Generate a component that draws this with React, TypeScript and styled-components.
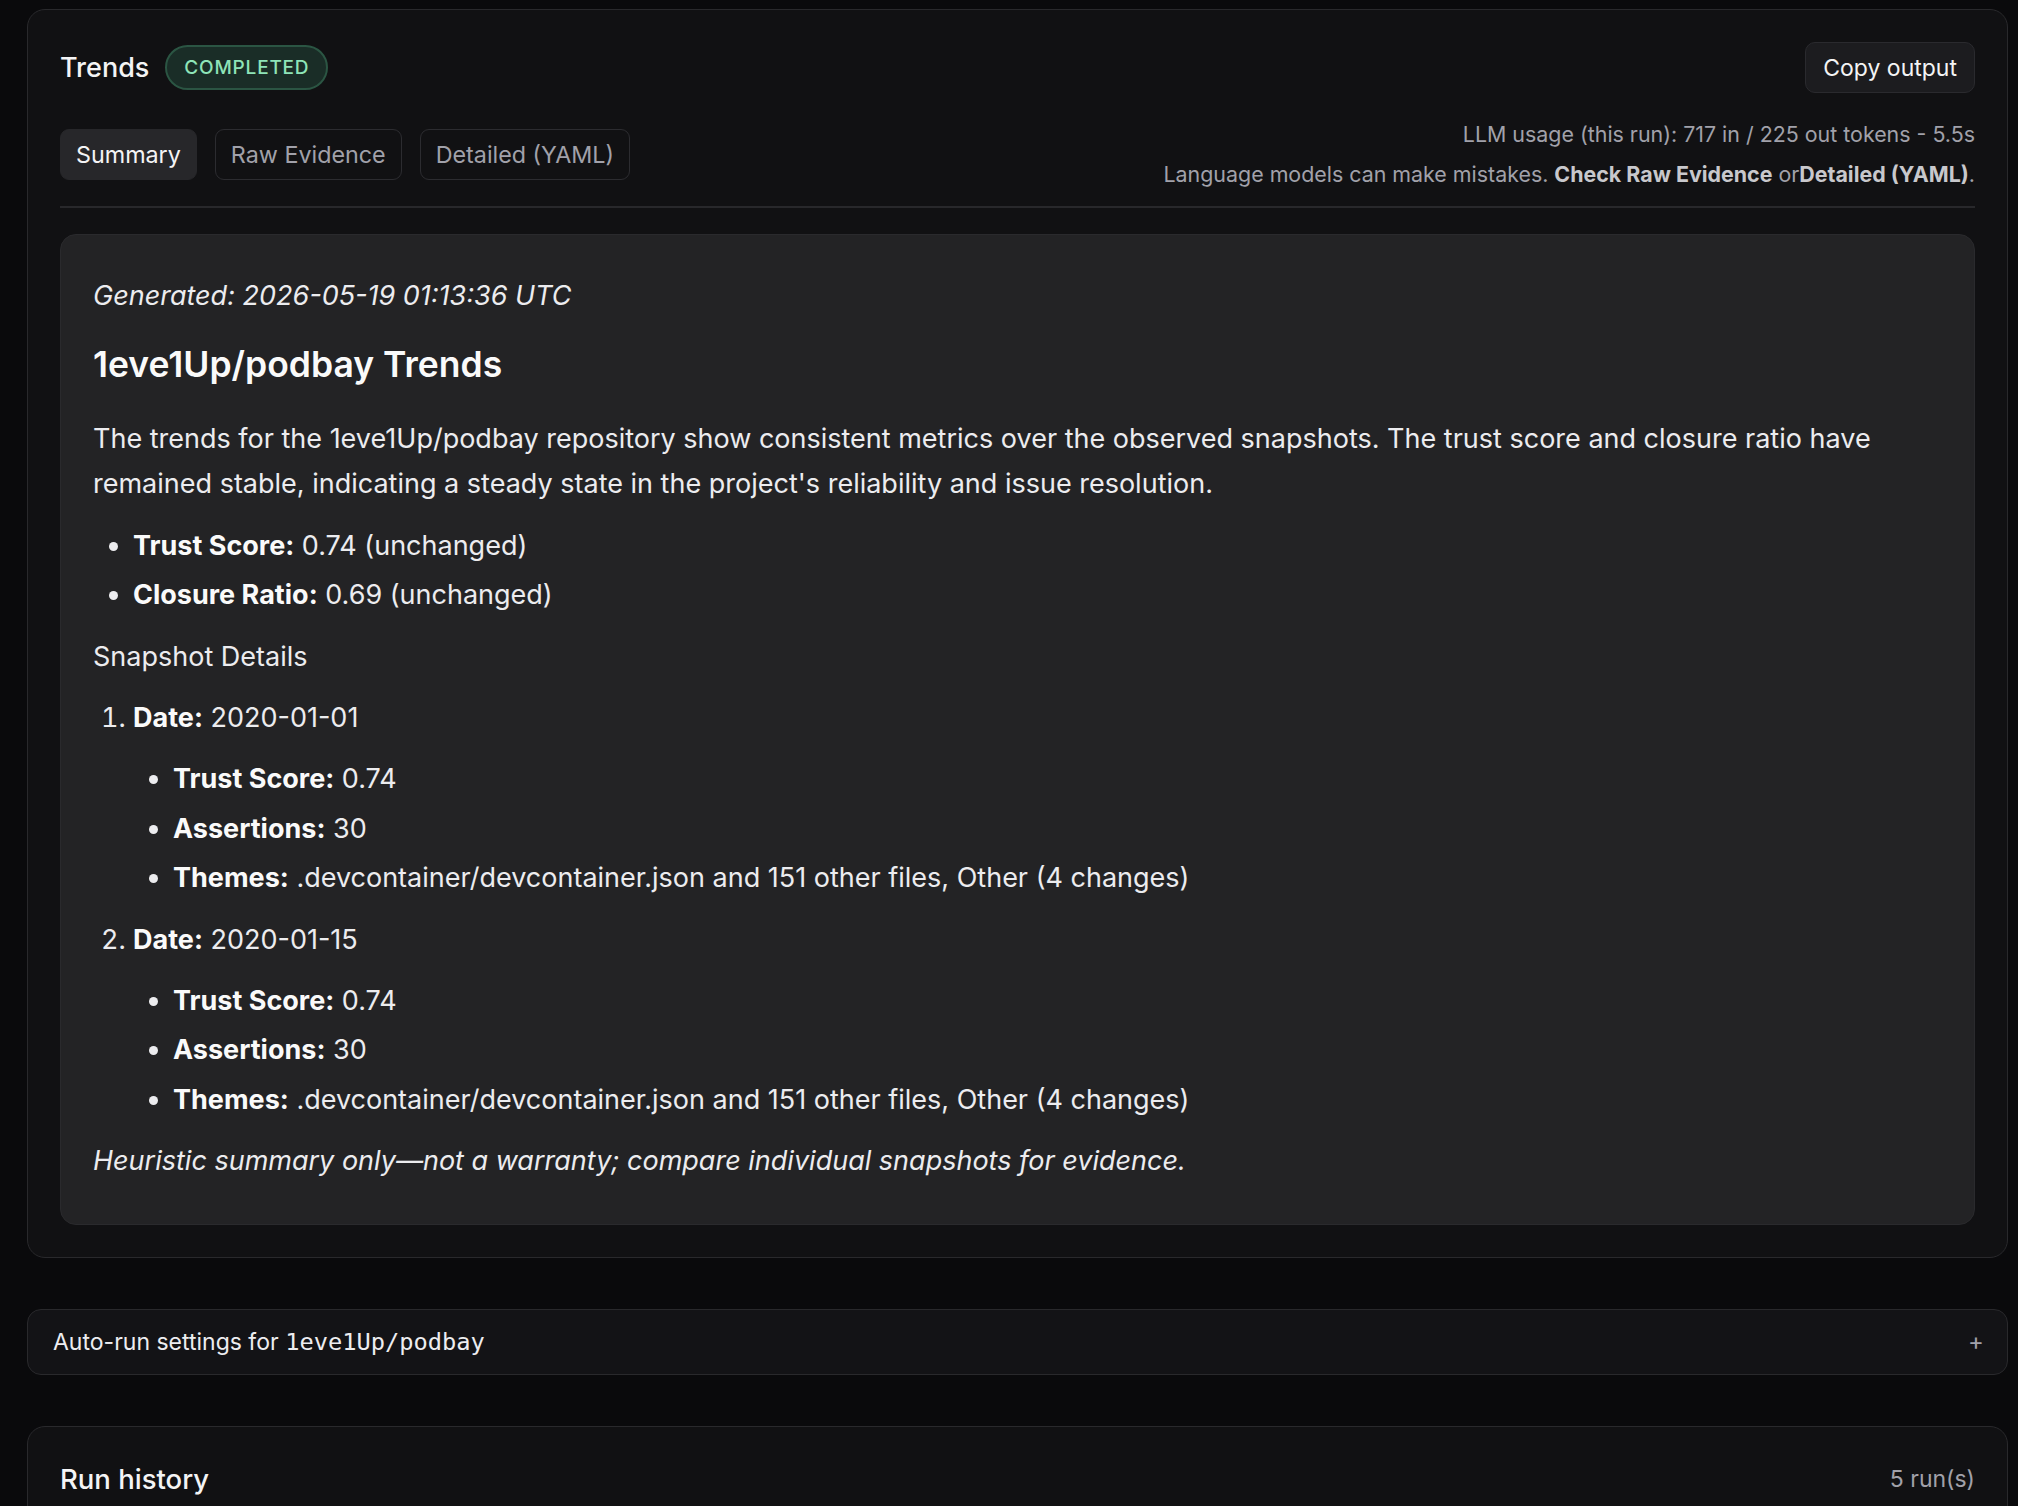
import React from "react";
import styled, { createGlobalStyle } from "styled-components";

const GlobalStyle = createGlobalStyle`
  html, body {
    margin: 0;
    padding: 0;
    background: #0a0a0c;
    color: #ededf0;
    font-family: Inter, "Noto Sans", sans-serif;
  }
`;

const Page = styled.div`
  padding: 9px 10px 0 27px;
  display: flex;
  flex-direction: column;
  gap: 51px;
`;

const Card = styled.section`
  background: #111113;
  border: 1px solid #29292c;
  border-radius: 18px;
  padding: 32px;
`;

const HeaderRow = styled.div`
  display: flex;
  align-items: center;
  justify-content: space-between;
  height: 51px;
`;

const TitleGroup = styled.div`
  display: flex;
  align-items: center;
  gap: 16px;
`;

const Title = styled.h2`
  margin: 0;
  font-size: 27px;
  font-weight: 500;
  color: #f4f4f5;
`;

const Badge = styled.span`
  display: inline-flex;
  align-items: center;
  height: 41px;
  padding: 0 17px;
  border-radius: 999px;
  background: #1a2d27;
  border: 2px solid #2b5543;
  color: #8ee4b8;
  font-size: 19px;
  font-weight: 500;
  letter-spacing: 0.8px;
`;

const GhostButton = styled.button`
  height: 51px;
  padding: 0 17px;
  border-radius: 10px;
  background: #1c1c1f;
  border: 1px solid #2a2a2e;
  color: #f4f4f5;
  font-family: inherit;
  font-size: 23px;
`;

const TabsRow = styled.div`
  display: flex;
  align-items: center;
  justify-content: space-between;
  margin-top: 21px;
  padding-bottom: 12px;
  border-bottom: 2px solid #28282b;
`;

const Tabs = styled.div`
  display: flex;
  gap: 18px;
`;

const Tab = styled.button<{ $active?: boolean }>`
  height: 51px;
  padding: 0 15px;
  border-radius: 9px;
  font-family: inherit;
  font-size: 23.3px;
  background: ${p => (p.$active ? "#27272a" : "transparent")};
  border: 1px solid ${p => (p.$active ? "#27272a" : "#2c2c30")};
  color: ${p => (p.$active ? "#f4f4f5" : "#a1a1aa")};
`;

const Meta = styled.div`
  display: flex;
  flex-direction: column;
  align-items: flex-end;
  font-size: 21.4px;
  line-height: 40px;
  color: #a1a1aa;
  strong {
    color: #c8c8cc;
    font-weight: 700;
  }
`;

const Panel = styled.div`
  margin-top: 26px;
  background: #232325;
  border: 1px solid #2a2a2d;
  border-radius: 16px;
  padding: 38px 32px 40px;
  font-size: 27px;
  line-height: 45.5px;
  color: #ececef;

  p {
    margin: 16px 0;
  }
  p:first-child {
    margin-top: 0;
  }
  p:last-child {
    margin-bottom: 0;
  }
  strong {
    font-weight: 700;
    color: #fafafa;
  }
  ul,
  ol {
    margin: 16px 0;
    padding-left: 40px;
  }
  ul {
    list-style: disc;
  }
  li {
    margin: 4px 0;
  }
  li > ul {
    margin: 15.5px 0 16px;
    list-style: disc;
  }
`;

const Heading = styled.h3`
  margin: 24px 0 30px;
  font-size: 35.5px;
  line-height: 43px;
  font-weight: 600;
  color: #fafafa;
`;

const Collapsible = styled.div`
  display: flex;
  align-items: center;
  justify-content: space-between;
  height: 64px;
  padding: 0 23px 0 25px;
  background: #131316;
  border: 1px solid #29292c;
  border-radius: 14px;
  font-size: 23px;
  color: #ededf0;
`;

const Mono = styled.code`
  font-family: "DejaVu Sans Mono", "Liberation Mono", monospace;
  font-size: 23.7px;
`;

const Plus = styled.span`
  color: #a1a1aa;
  font-size: 24px;
`;

const HistoryCard = styled(Card)`
  padding-bottom: 80px;
  border-bottom-left-radius: 0;
  border-bottom-right-radius: 0;
`;

const HistoryHeader = styled.div`
  display: flex;
  align-items: center;
  justify-content: space-between;
  padding-top: 3px;
`;

const HistoryTitle = styled(Title)`
  font-size: 27.5px;
`;

const Count = styled.span`
  color: #a1a1aa;
  font-size: 23px;
`;

const snapshots = [
  { date: "2020-01-01", trust: "0.74", assertions: "30" },
  { date: "2020-01-15", trust: "0.74", assertions: "30" }
];

export default function App() {
  return (
    <>
      <GlobalStyle />
      <Page>
        <Card>
          <HeaderRow>
            <TitleGroup>
              <Title>Trends</Title>
              <Badge>COMPLETED</Badge>
            </TitleGroup>
            <GhostButton>Copy output</GhostButton>
          </HeaderRow>
          <TabsRow>
            <Tabs>
              <Tab $active>Summary</Tab>
              <Tab>Raw Evidence</Tab>
              <Tab>Detailed (YAML)</Tab>
            </Tabs>
            <Meta>
              <span>LLM usage (this run): 717 in / 225 out tokens - 5.5s</span>
              <span>
                Language models can make mistakes. <strong>Check Raw Evidence</strong> or
                <strong>Detailed (YAML)</strong>.
              </span>
            </Meta>
          </TabsRow>
          <Panel>
            <p>
              <em>Generated: 2026-05-19 01:13:36 UTC</em>
            </p>
            <Heading>1eve1Up/podbay Trends</Heading>
            <p>
              The trends for the 1eve1Up/podbay repository show consistent metrics over the
              observed snapshots. The trust score and closure ratio have remained stable,
              indicating a steady state in the project's reliability and issue resolution.
            </p>
            <ul>
              <li>
                <strong>Trust Score:</strong> 0.74 (unchanged)
              </li>
              <li>
                <strong>Closure Ratio:</strong> 0.69 (unchanged)
              </li>
            </ul>
            <p>Snapshot Details</p>
            <ol>
              {snapshots.map(s => (
                <li key={s.date}>
                  <strong>Date:</strong> {s.date}
                  <ul>
                    <li>
                      <strong>Trust Score:</strong> {s.trust}
                    </li>
                    <li>
                      <strong>Assertions:</strong> {s.assertions}
                    </li>
                    <li>
                      <strong>Themes:</strong> .devcontainer/devcontainer.json and 151 other
                      files, Other (4 changes)
                    </li>
                  </ul>
                </li>
              ))}
            </ol>
            <p>
              <em>
                Heuristic summary only—not a warranty; compare individual snapshots for
                evidence.
              </em>
            </p>
          </Panel>
        </Card>
        <Collapsible>
          <span>
            Auto-run settings for <Mono>1eve1Up/podbay</Mono>
          </span>
          <Plus>+</Plus>
        </Collapsible>
        <HistoryCard>
          <HistoryHeader>
            <HistoryTitle>Run history</HistoryTitle>
            <Count>5 run(s)</Count>
          </HistoryHeader>
        </HistoryCard>
      </Page>
    </>
  );
}
